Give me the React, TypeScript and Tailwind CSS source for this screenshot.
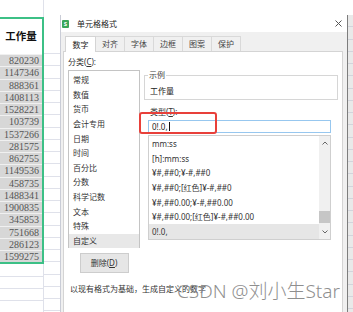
import React from "react";

const nums = [
  "820230", "1147346", "888361", "1408113", "1528221", "103739", "1537266",
  "281575", "862755", "1149536", "458735", "1488341", "1900835", "345853",
  "751668", "286123", "1599275",
];

const categories = [
  "常规", "数值", "货币", "会计专用", "日期", "时间", "百分比",
  "分数", "科学记数", "文本", "特殊", "自定义",
];

const formats = [
  "mm:ss",
  "[h]:mm:ss",
  "¥#,##0;¥-#,##0",
  "¥#,##0;[红色]¥-#,##0",
  "¥#,##0.00;¥-#,##0.00",
  "¥#,##0.00;[红色]¥-#,##0.00",
  "0!.0,",
];

const tabs = ["数字", "对齐", "字体", "边框", "图案", "保护"];

function SheetStrip() {
  return (
    <div className="flex w-[60px] shrink-0 bg-white">
      {/* column A */}
      <div className="flex w-[44px] shrink-0 flex-col">
        <div className="h-[17px] shrink-0 border-r border-[#dfe1ea]" />
        <div className="-ml-[2px] w-[46px] shrink-0 border-2 border-[#3cc086]">
          <div className="flex h-[35px] items-center justify-center bg-white text-[10.5px] font-bold text-[#111]">
            工作量
          </div>
          {nums.map((n) => (
            <div
              key={n}
              className="h-[12.25px] border-t border-[#f0f0f0] bg-[#d7d7d7] pr-[3px] text-right font-['Liberation_Serif',serif] text-[10px] leading-[11px] text-[#555]"
            >
              {n}
            </div>
          ))}
        </div>
        {[0, 1, 2, 3, 4].map((i) => (
          <div key={i} className="h-[12.25px] shrink-0 border-b border-r border-[#dfe1ea]" />
        ))}
      </div>
      {/* column B */}
      <div className="flex w-[16px] shrink-0 flex-col">
        <div className="h-[17px] shrink-0" />
        <div className="h-[37px] shrink-0 border-b border-[#dfe1ea]" />
        {[...nums, "a", "b", "c", "d", "e"].map((n) => (
          <div key={n} className="h-[12.25px] shrink-0 border-b border-[#dfe1ea]" />
        ))}
      </div>
    </div>
  );
}

function Chevron({ up }: { up?: boolean }) {
  return (
    <svg width="6" height="4" viewBox="0 0 6 4" className="mx-auto">
      <path
        d={up ? "M0.5 3.5 L3 1 L5.5 3.5" : "M0.5 0.5 L3 3 L5.5 0.5"}
        fill="none"
        stroke="#666"
        strokeWidth="1"
      />
    </svg>
  );
}

function Dialog() {
  return (
    <div className="flex w-[288px] shrink-0 flex-col bg-white pt-[15px]">
      <div className="flex flex-1 flex-col border-l border-r border-l-[#c9ccd6] border-r-[#7d7d7d] bg-[#f0f0f0]">
        {/* title bar */}
        <div className="flex h-[17px] shrink-0 items-center bg-white">
          <div className="ml-[1px] flex h-[8px] w-[7px] items-center justify-center rounded-[1px] bg-[#3aa65a] text-[6px] font-bold leading-none text-white">
            S
          </div>
          <span className="ml-[8px] text-[8px] leading-none text-[#222]">单元格格式</span>
          <svg width="7" height="7" viewBox="0 0 7 7" className="ml-auto mr-[5px]">
            <path d="M0.5 0.5 L6.5 6.5 M6.5 0.5 L0.5 6.5" stroke="#555" strokeWidth="1" />
          </svg>
        </div>
        {/* tabs */}
        <div className="flex h-[19px] shrink-0 items-end pl-[4px]">
          {tabs.map((t, i) => (
            <div
              key={t}
              className={
                i === 0
                  ? "relative z-10 -mb-px flex h-[16px] w-[31px] items-center justify-center border border-b-0 border-[#d4d4d4] bg-white text-[8px] text-[#222]"
                  : "-ml-px flex h-[15px] w-[30px] items-center justify-center border border-b-0 border-[#d9d9d9] bg-[#f0f0f0] text-[8px] text-[#444]"
              }
            >
              {t}
            </div>
          ))}
        </div>
        {/* panel */}
        <div className="ml-[2px] mr-[4px] flex flex-1 flex-col border border-b-0 border-[#d4d4d4] bg-white">
          <div className="flex">
            {/* left column */}
            <div className="ml-[4px] flex w-[72px] flex-col">
              <div className="mt-[5px] h-[10px] text-[8px] leading-[10px] text-[#333]">
                分类(<span className="underline">C</span>):
              </div>
              <div className="mt-[3px] h-[178px] border border-[#c4c4c4] pt-[2px]">
                {categories.map((c) => (
                  <div
                    key={c}
                    className={
                      c === "自定义"
                        ? "flex h-[14.6px] items-center bg-[#e8e8e8] pl-[4px] text-[8px] text-[#333]"
                        : "flex h-[14.6px] items-center pl-[4px] text-[8px] text-[#333]"
                    }
                  >
                    {c}
                  </div>
                ))}
              </div>
              <div className="mx-auto mt-[5px] flex h-[20px] w-[49px] items-center justify-center border border-[#cdcdcd] bg-[#e6e6e6] text-[8px] text-[#333]">
                删除(<span className="underline">D</span>)
              </div>
            </div>
            {/* right column */}
            <div className="ml-[4px] flex flex-col">
              <div className="relative mt-[23px] h-[25px] w-[194px] border border-[#d6d6d6]">
                <span className="absolute -top-[6px] left-[3px] bg-white px-[1px] text-[8px] leading-[10px] text-[#444]">
                  示例
                </span>
                <div className="pl-[5px] pt-[10px] text-[8px] leading-[10px] text-[#222]">工作量</div>
              </div>
              <div className="ml-[6px] mt-[7px] h-[10px] text-[8px] leading-[10px] text-[#333]">
                类型(<span className="underline">T</span>):
              </div>
              <div className="ml-[4px] mt-[3px] flex h-[13px] w-[183px] items-center border border-[#97c7ef] pl-[3px] text-[8px] text-[#222]">
                0!.0,
                <span className="ml-[1px] h-[9px] w-px bg-[#111]" />
              </div>
              <div className="ml-[4px] mt-[2px] flex h-[105px] w-[183px] border border-[#cfcfcf]">
                <div className="flex flex-1 flex-col pt-[1px]">
                  {formats.map((f) => (
                    <div
                      key={f}
                      className={
                        f === "0!.0,"
                          ? "flex h-[14.6px] items-center bg-[#e6e6e6] pl-[3px] text-[8px] text-[#333]"
                          : "flex h-[14.6px] items-center pl-[3px] text-[8px] text-[#333]"
                      }
                    >
                      {f}
                    </div>
                  ))}
                </div>
                <div className="flex w-[11px] flex-col bg-[#f0f0f0]">
                  <div className="mt-[5px]">
                    <Chevron up />
                  </div>
                  <div className="mx-auto mt-[66px] h-[12px] w-[11px] bg-[#c6c6c6]" />
                  <div className="mt-[7px]">
                    <Chevron />
                  </div>
                </div>
              </div>
            </div>
          </div>
          <div className="ml-[6px] mt-[11px] whitespace-nowrap text-[8px] leading-[10px] text-[#333]">
            以现有格式为基础，生成自定义的数字
          </div>
        </div>
      </div>
    </div>
  );
}

function RightStrip() {
  return (
    <div className="flex w-[5px] shrink-0 flex-col bg-white pt-[15px]">
      <div className="flex flex-1 flex-col bg-[#e9e9e9]">
        {Array.from({ length: 24 }).map((_, i) => (
          <div key={i} className="h-[12.25px] shrink-0 border-b border-[#d2d4dc]" />
        ))}
      </div>
    </div>
  );
}

export default function App() {
  return (
    <div className="relative flex h-[312px] w-[353px] overflow-hidden bg-white font-['Noto_Sans','Noto_Sans_CJK_SC',sans-serif]">
      <SheetStrip />
      <Dialog />
      <RightStrip />
      {/* highlight box */}
      <div className="absolute left-[139px] top-[112px] h-[22px] w-[78px] rounded-[3px] border-2 border-[#e8403a]" />
      {/* watermark */}
      <div className="absolute left-[177px] top-[280px] whitespace-nowrap text-[19px] font-light leading-[22px] text-[#8f8f8f] font-['Noto_Sans','Noto_Sans_CJK_SC',sans-serif]">
        CSDN @刘小生Star
      </div>
    </div>
  );
}
